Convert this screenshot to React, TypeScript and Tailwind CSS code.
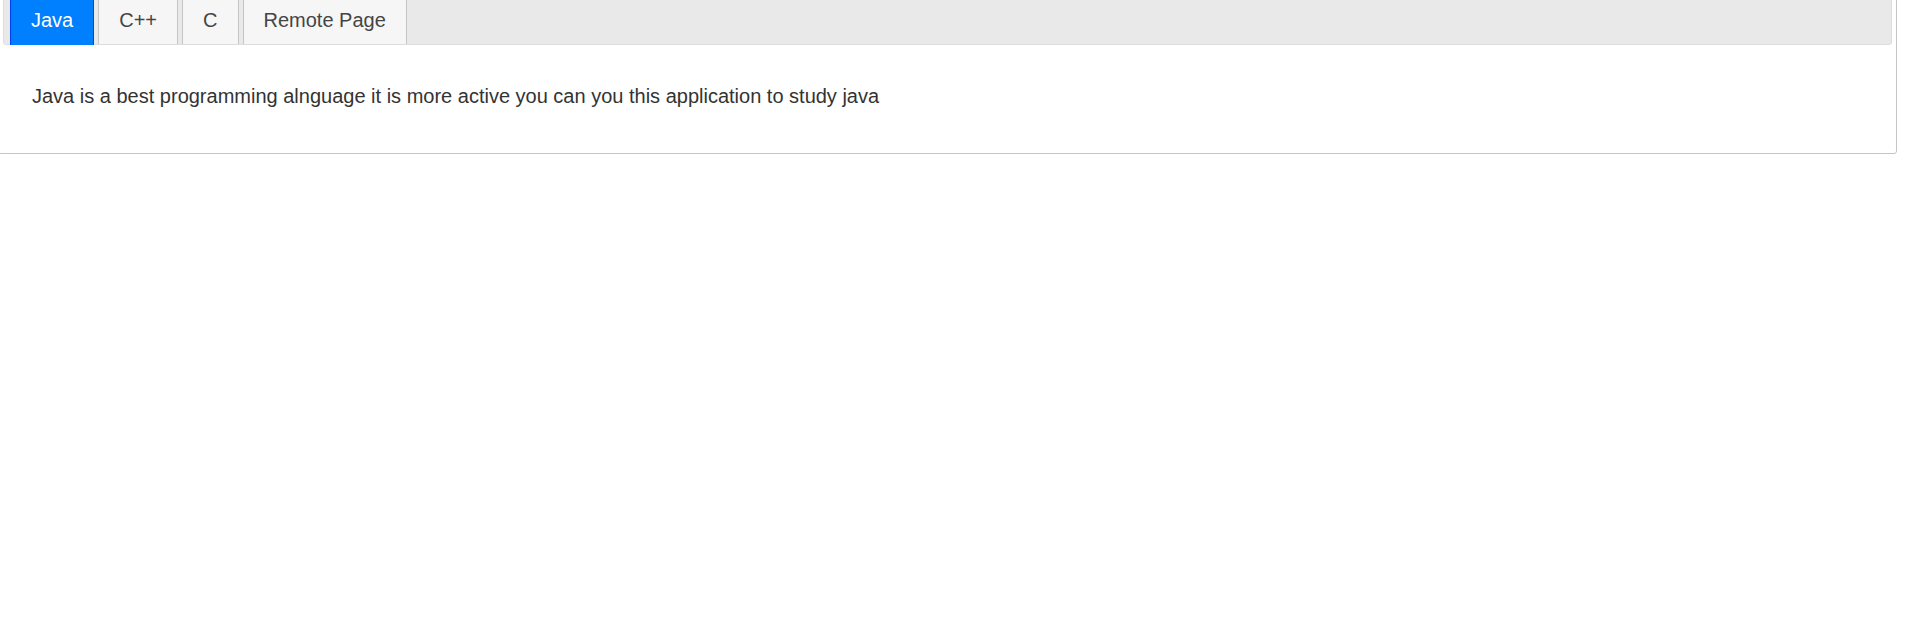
import { useState } from 'react';

const TABS = [
  { id: 'java', label: 'Java' },
  { id: 'cpp', label: 'C++' },
  { id: 'c', label: 'C' },
  { id: 'remote', label: 'Remote Page' },
];

const PANELS: Record<string, string> = {
  java: 'Java is a best programming alnguage it is more active you can you this application to study java',
  cpp: 'C++ is an object oriented extension of the C language.',
  c: 'C is a procedural programming language.',
  remote: 'Loading...',
};

export default function App() {
  const [active, setActive] = useState('java');

  return (
    <div className="min-h-screen bg-white font-['Liberation_Sans',Arial,sans-serif] text-[20px]">
      {/* Tabs widget */}
      <div className="-mt-[13px] -ml-[2px] mr-[8px] rounded-[3px] border border-[#c5c5c5] bg-white p-[4px]">
        {/* Nav header */}
        <ul className="flex items-start rounded-[3px] border border-[#dddddd] bg-[#e9e9e9] pl-[6px] pr-[4px] pt-[4px]">
          {TABS.map((tab) => {
            const isActive = tab.id === active;
            return (
              <li
                key={tab.id}
                onClick={() => setActive(tab.id)}
                className={
                  isActive
                    ? 'relative z-10 mt-px mr-[4px] -mb-px cursor-pointer rounded-t-[3px] border border-b-0 border-[#003eff] bg-[#007fff] px-[20px] pt-[10px] pb-[13px] leading-[23px] text-white'
                    : 'mt-px mr-[4px] cursor-pointer rounded-t-[3px] border border-b-0 border-[#c5c5c5] bg-[#f6f6f6] px-[20px] pt-[10px] pb-[12px] leading-[23px] text-[#454545]'
                }
              >
                {tab.label}
              </li>
            );
          })}
        </ul>

        {/* Panel */}
        <div className="px-[29px] pt-[20px] pb-[21px] text-[#333333]">
          <p className="my-[20px] leading-[23px]">{PANELS[active]}</p>
        </div>
      </div>
    </div>
  );
}
